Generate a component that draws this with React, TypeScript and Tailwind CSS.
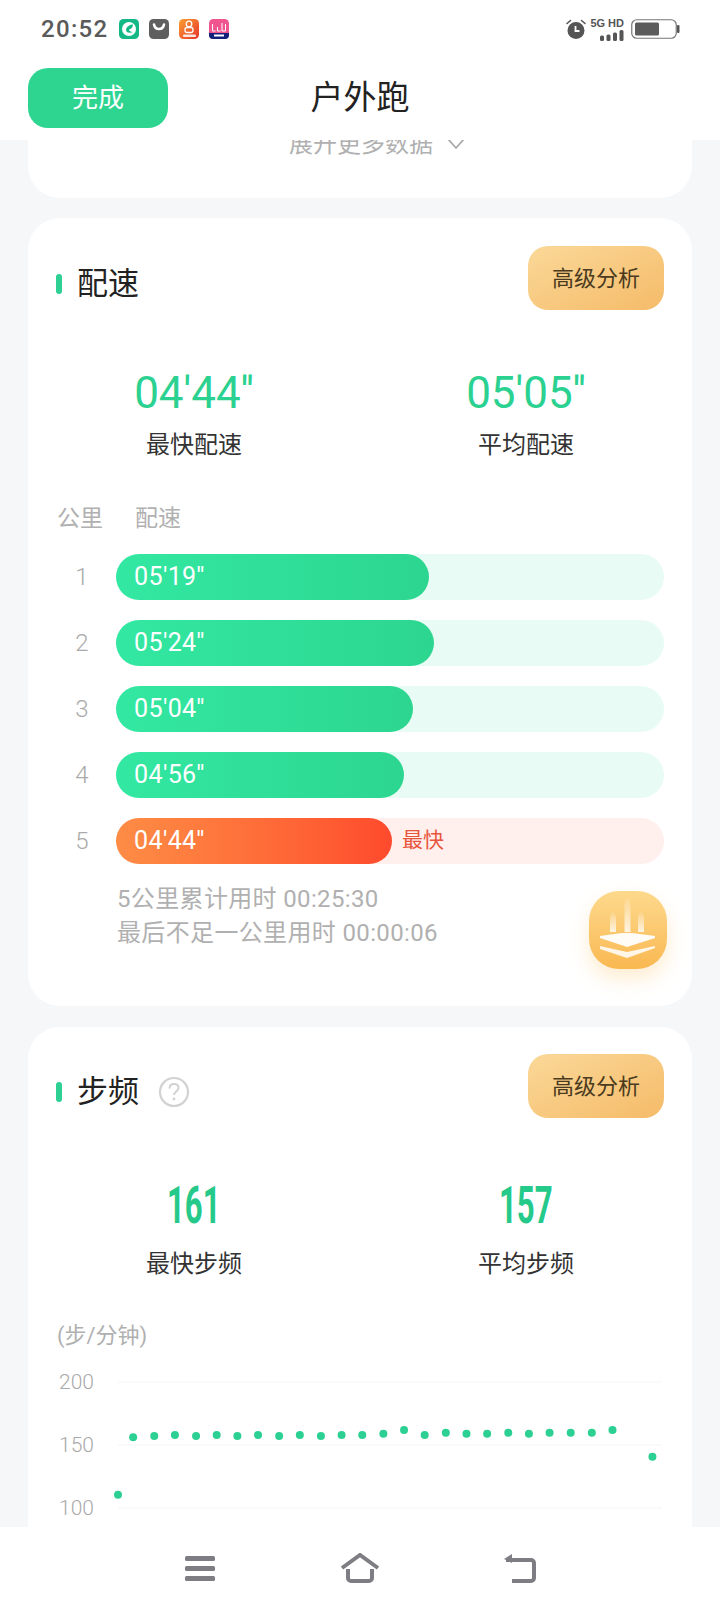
const CJK = `font-['Roboto','Noto_Sans_CJK_SC',sans-serif]`;

const bars = [
  { n: 1, t: `05'19''`, w: 313 },
  { n: 2, t: `05'24''`, w: 318 },
  { n: 3, t: `05'04''`, w: 297 },
  { n: 4, t: `04'56''`, w: 288 },
];

const dotsX = [257, 290, 336, 381, 427, 472, 517, 562, 608, 653, 699, 744, 789, 835, 880, 925, 971, 1016, 1061, 1107, 1152, 1197, 1243, 1289, 1334, 1421];
const dotsY = [524, 352, 348, 345, 348, 345, 348, 345, 348, 345, 348, 345, 345, 341, 330, 345, 338, 341, 341, 338, 341, 338, 338, 338, 330, 410];

function AppIcons() {
  return (
    <div className="flex items-center gap-[10px]">
      <svg width="20" height="20" viewBox="0 0 20 20">
        <rect width="20" height="20" rx="4.500" fill="#14b886" />
        <circle cx="10" cy="10" r="7" fill="#fff" />
        <path d="M14 5.500C10.500 5.500 7 8 7 11c0 2.500 3.500 3.500 7 2-2.500-.2-4-1.200-4-2.500 2.200-.2 3.800-1.800 4-5z" fill="#14b886" />
      </svg>
      <svg width="20" height="20" viewBox="0 0 20 20">
        <rect width="20" height="20" rx="4.500" fill="#5f5f5f" />
        <path d="M5 5.500c.6 3.200 2.400 4.500 5 4.500s4.400-1.300 5-4.500" fill="none" stroke="#fff" strokeWidth="2.600" strokeLinecap="round" />
      </svg>
      <svg width="20" height="20" viewBox="0 0 20 20">
        <defs>
          <linearGradient id="a3" x1="0" y1="0" x2="1" y2="1">
            <stop offset="0" stopColor="#f9a030" />
            <stop offset="1" stopColor="#e8322c" />
          </linearGradient>
        </defs>
        <rect width="20" height="20" rx="4.500" fill="url(#a3)" />
        <circle cx="10" cy="5" r="2.800" fill="none" stroke="#fff" strokeWidth="1.300" />
        <rect x="6" y="8.500" width="8" height="5" rx="2" fill="none" stroke="#fff" strokeWidth="1.300" />
        <rect x="4" y="15.500" width="13" height="2.500" rx="1" fill="#fff" opacity=".85" />
      </svg>
      <svg width="20" height="20" viewBox="0 0 20 20">
        <rect width="20" height="20" rx="4.500" fill="#f0558f" />
        <path d="M0 14h20v2a4 4 0 0 1-4 4H4a4 4 0 0 1-4-4z" fill="#12207a" />
        <path d="M3.500 5v7h3M8.500 8v4h3M13 4v8h3.500V5" fill="none" stroke="#fff" strokeWidth="1" />
        <rect x="5" y="15.500" width="10" height="2" fill="#fff" />
      </svg>
    </div>
  );
}

function StatusRight() {
  return (
    <div className="flex items-center">
      <svg width="22" height="22" viewBox="0 0 22 22" className="mr-[4px]">
        <circle cx="11" cy="12.500" r="8.500" fill="#555" />
        <path d="M2 5.500 5.500 2.500M20 5.500 16.500 2.500" stroke="#555" strokeWidth="1.600" strokeLinecap="round" />
        <path d="M10.500 8v5h4" fill="none" stroke="#fff" strokeWidth="1.800" />
      </svg>
      <div className="flex flex-col items-end w-[33px] mr-[7px]">
        <span className="font-['Liberation_Sans',sans-serif] text-[11px] leading-[11px] font-bold text-[#555] whitespace-nowrap">5G HD</span>
        <svg width="24" height="11" viewBox="0 0 24 11" className="mt-[1px]">
          <rect x="0" y="5.500" width="4" height="5.500" rx="1.500" fill="#555" />
          <rect x="6.500" y="4.500" width="4" height="6.500" rx="1.500" fill="#555" />
          <rect x="13" y="2.500" width="4" height="8.500" rx="1.500" fill="#555" />
          <rect x="19.500" y="0" width="4" height="11" rx="1.500" fill="#555" />
        </svg>
      </div>
      <svg width="49" height="20" viewBox="0 0 49 20">
        <rect x=".75" y=".75" width="44.500" height="18.500" rx="5" fill="#fff" stroke="#777" strokeWidth="1.200" />
        <rect x="4" y="3.500" width="24" height="13" rx="1.500" fill="#5c5c5c" />
        <rect x="46" y="6" width="2.500" height="8" rx="1" fill="#555" />
      </svg>
    </div>
  );
}

function CardHeader({ title, help }: { title: string; help?: boolean }) {
  return (
    <div className="flex items-start justify-between px-[28px]">
      <div className="flex items-center h-[52px] mt-[12px]">
        <span className="block w-[6px] h-[20px] rounded-full bg-[#2ed193]" />
        <span className="ml-[15px] text-[31px] leading-[40px] text-[#222]">{title}</span>
        {help && (
          <svg width="32" height="32" viewBox="0 0 32 32" className="ml-[19px]">
            <circle cx="16" cy="16" r="14" fill="none" stroke="#d2d2d2" strokeWidth="2.200" />
            <path d="M11.500 12.500c0-3 2-4.500 4.500-4.500s4.500 1.500 4.500 4c0 3.500-4.500 3.500-4.500 7" fill="none" stroke="#d2d2d2" strokeWidth="2" />
            <circle cx="16" cy="23" r="1.400" fill="#d2d2d2" />
          </svg>
        )}
      </div>
      <div className="w-[136px] h-[64px] rounded-[20px] bg-gradient-to-br from-[#fad898] to-[#f5bb68] flex items-center justify-center text-[22px] text-[#4a3a20]">
        高级分析
      </div>
    </div>
  );
}

function Stat({ value, label, narrow }: { value: string; label: string; narrow?: boolean }) {
  return (
    <div className="flex flex-col items-center">
      {narrow ? (
        <div className="h-[56px] text-[52px] leading-[56px] font-bold text-[#25c98a] scale-x-[0.6]">{value}</div>
      ) : (
        <div className="h-[48px] text-[44px] leading-[48px] font-normal text-[#2bd190]">{value}</div>
      )}
      <div className={`${narrow ? "mt-[14px]" : "mt-[12px]"} h-[32px] text-[24px] leading-[32px] text-[#333]`}>{label}</div>
    </div>
  );
}

function Float() {
  return (
    <div className="absolute top-[673px] right-[25px] w-[78px] h-[78px] rounded-[30px] bg-gradient-to-b from-[#fdd98c] to-[#f9b850] shadow-[0_10px_20px_rgba(250,190,90,0.28)]">
      <svg width="78" height="78" viewBox="0 0 78 78">
        <defs>
          <linearGradient id="fv" x1="0" y1="0" x2="0" y2="1">
            <stop offset="0" stopColor="#fff" stopOpacity=".1" />
            <stop offset="1" stopColor="#fff" stopOpacity=".8" />
          </linearGradient>
        </defs>
        <path d="M35.500 41V14c0-5 3-7 3-7s3 2 3 7v27z" fill="url(#fv)" />
        <path d="M21 41V27c0-4 3-6 3-6s3 2 3 6v14z" fill="url(#fv)" />
        <path d="M49 41V27c0-4 3-6 3-6s3 2 3 6v14z" fill="url(#fv)" />
        <path d="M11 45c10-1 17-3 27-3s18 2 28 3v2L38 56 11 47z" fill="#fff" opacity=".95" />
        <path d="M11 55l27 6 28-6v2L38 67 11 58z" fill="#fff" opacity=".85" />
      </svg>
    </div>
  );
}

export default function App() {
  return (
    <div className={`${CJK} w-[720px] h-[1612px] flex flex-col overflow-hidden bg-white`}>
      <header className="h-[140px] shrink-0 bg-white relative z-10">
        <div className="h-[58px] pl-[41px] pr-[40px] flex items-center justify-between">
          <div className="flex items-center">
            <span className="w-[78px] text-[24px] leading-[30px] font-medium text-[#5a5a5a] tracking-[1.300px]">20:52</span>
            <AppIcons />
          </div>
          <StatusRight />
        </div>
        <div className="mt-[10px] grid grid-cols-[1fr_auto_1fr] items-center pl-[28px]">
          <div className="w-[140px] h-[60px] rounded-[20px] bg-[#2dd590] flex items-center justify-center text-[26px] text-white">
            完成
          </div>
          <div className="text-[33px] leading-[44px] text-[#222] -ml-[28px]">户外跑</div>
          <div />
        </div>
      </header>

      <main className="flex-1 min-h-0 overflow-hidden bg-[#f5f7f9] px-[28px]">
        <section className="h-[58px] bg-white rounded-b-[32px] flex justify-center">
          <div className="-mt-[12px] h-[32px] flex items-center text-[24px] leading-[32px] text-[#b0b0b0] translate-x-[17px]">
            <span>展开更多数据</span>
            <svg width="18" height="12" viewBox="0 0 18 12" className="ml-[14px]">
              <path d="M1 1l8 9 8-9" fill="none" stroke="#aaa" strokeWidth="1.800" />
            </svg>
          </div>
        </section>

        <section className="relative mt-[20px] h-[788px] bg-white rounded-[32px] pt-[28px]">
          <CardHeader title="配速" />
          <div className="mt-[59px] grid grid-cols-2">
            <Stat value={`04'44''`} label="最快配速" />
            <Stat value={`05'05''`} label="平均配速" />
          </div>
          <div className="mt-[42px] px-[28px] flex h-[32px] text-[23px] leading-[32px] text-[#b0b0b0]">
            <span className="ml-[1px] w-[78px]">公里</span>
            <span>配速</span>
          </div>
          <div className="mt-[19px] px-[28px] flex flex-col gap-[20px]">
            {bars.map((b) => (
              <div key={b.n} className="flex items-center">
                <span className="w-[52px] text-center text-[24px] text-[#aaa] font-light">{b.n}</span>
                <div className="ml-[8px] flex-1 h-[46px] rounded-full bg-[#e9fbf5]">
                  <div
                    className="h-full rounded-full bg-gradient-to-r from-[#33e8a2] to-[#2cd690] pl-[18px] flex items-center text-[25px] text-white tracking-[0.4px]"
                    style={{ width: b.w }}
                  >
                    {b.t}
                  </div>
                </div>
              </div>
            ))}
            <div className="flex items-center">
              <span className="w-[52px] text-center text-[24px] text-[#aaa] font-light">5</span>
              <div className="ml-[8px] flex-1 h-[46px] rounded-full bg-[#ffefed] flex items-center">
                <div className="w-[276px] h-full rounded-full bg-gradient-to-r from-[#fd8c45] to-[#fe4a2d] pl-[18px] flex items-center text-[25px] text-white tracking-[0.4px]">
                  {`04'44''`}
                </div>
                <span className="ml-[10px] text-[21px] text-[#e8553c]">最快</span>
              </div>
            </div>
          </div>
          <div className="mt-[18px] pl-[89px] text-[24px] leading-[34px] text-[#b0b0b0] tracking-[0.35px]">
            <div>5公里累计用时 00:25:30</div>
            <div>最后不足一公里用时 00:00:06</div>
          </div>
          <Float />
        </section>

        <section className="mt-[21px] bg-white rounded-[32px] pt-[27px] pb-[80px]">
          <CardHeader title="步频" help />
          <div className="mt-[60px] grid grid-cols-2">
            <Stat value="161" label="最快步频" narrow />
            <Stat value="157" label="平均步频" narrow />
          </div>
          <div className="mt-[40px] pl-[29px] h-[32px] text-[22px] leading-[32px] text-[#b0b0b0]">(步/分钟)</div>
          <div className="flex -mt-[1px] pl-[28px]">
            <div className="w-[60px] pr-[22px] text-right text-[21px] font-light text-[#aaa]">
              <div className="h-[63px] leading-[63px]">200</div>
              <div className="h-[63px] leading-[63px]">150</div>
              <div className="h-[63px] leading-[63px]">100</div>
            </div>
            <svg width="548" height="190" viewBox="0 0 548 190" className="overflow-visible">
              {[31, 94, 157].map((y) => (
                <line key={y} x1="2" x2="546" y1={y} y2={y} stroke="#f8f8f8" strokeWidth="1.500" />
              ))}
              {dotsX.map((x, i) => (
                <circle key={i} cx={x / 2.178 - 116} cy={1320 + dotsY[i] / 3 - 1351} r="4" fill="#2dd093" />
              ))}
            </svg>
          </div>
        </section>
      </main>

      <nav className="h-[85px] shrink-0 bg-white grid grid-cols-[160px_160px_160px] justify-center items-center pb-[3px] relative z-10">
        <div className="flex justify-center">
          <svg width="30" height="25" viewBox="0 0 30 25">
            <rect y="0" width="30" height="5" rx="1.500" fill="#7d7d83" />
            <rect y="10" width="30" height="5" rx="1.500" fill="#7d7d83" />
            <rect y="20" width="30" height="5" rx="1.500" fill="#7d7d83" />
          </svg>
        </div>
        <div className="flex justify-center">
          <svg width="40" height="30" viewBox="0 0 40 30">
            <path d="M2 15 20 2l18 13" fill="none" stroke="#7d7d83" strokeWidth="4" />
            <path d="M8 16v9a3 3 0 0 0 3 3h18a3 3 0 0 0 3-3v-9" fill="none" stroke="#7d7d83" strokeWidth="4" />
          </svg>
        </div>
        <div className="flex justify-center">
          <svg width="34" height="30" viewBox="0 0 34 30">
            <path d="M3 7h25a3 3 0 0 1 3 3v15a3 3 0 0 1-3 3H9" fill="none" stroke="#7d7d83" strokeWidth="4" />
            <path d="M1 6 9 1v9z" fill="#7d7d83" />
          </svg>
        </div>
      </nav>
    </div>
  );
}
